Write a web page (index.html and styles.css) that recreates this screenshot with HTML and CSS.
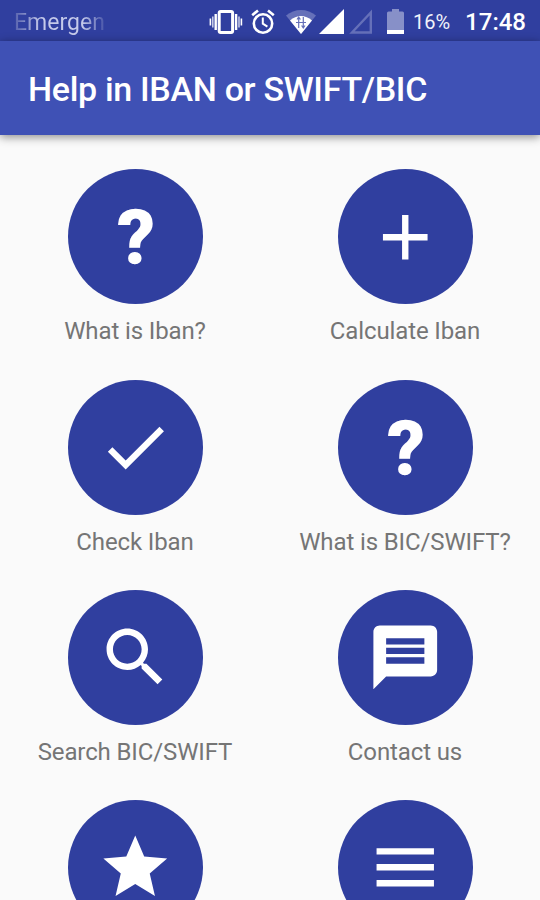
FILE: index.html
```html
<!DOCTYPE html>
<html lang="en">
<head>
    <meta charset="UTF-8">
    <meta name="viewport" content="width=device-width, initial-scale=1.0">
    <title>Help in IBAN or SWIFT/BIC</title>
    <link rel="stylesheet" href="styles.css">
</head>
<body>

    <div class="status-bar">
        <span class="carrier">Emergen</span>
        <div class="status-icons">
            <!-- vibrate -->
            <svg class="vibrate" width="34" height="26" viewBox="0 0 34 26">
                <rect x="10.2" y="2.5" width="13.4" height="21" rx="1.5" fill="none" stroke="#fff" stroke-width="3"/>
                <path d="M6.7 5v16M27.1 5v16" stroke="#fff" stroke-width="2.4"/>
                <path d="M3.8 7.5v11M30 7.5v11" stroke="#c3c8e6" stroke-width="1.6"/>
                <path d="M1.4 9.5v7M32.4 9.5v7" stroke="#fff" stroke-width="1.6"/>
            </svg>
            <!-- alarm -->
            <svg class="alarm" width="24" height="26" viewBox="0 0 24 26">
                <circle cx="12" cy="14.5" r="9.2" fill="none" stroke="#fff" stroke-width="2.6"/>
                <path d="M1.2 6.2L7 1.4M22.8 6.2L17 1.4" stroke="#fff" stroke-width="2.6"/>
                <path d="M11.8 8.5v6.2l4.6 3" fill="none" stroke="#fff" stroke-width="2"/>
            </svg>
            <!-- wifi -->
            <svg class="wifi" width="32" height="26" viewBox="0 0 32 26">
                <path d="M1 6.5C9.5 -1 22.5 -1 31 6.5L16 25z" fill="#6570b9"/>
                <path d="M5 11.5C11.5 5.5 20.5 5.5 27 11.5L16 25z" fill="#fff"/>
                <path d="M13.7 8v11M18.3 8v11M12 10.5l1.7-2.5 1.7 2.5M16.6 16.5l1.7 2.5 1.7-2.5M11 13.5h10" fill="none" stroke="#6570b9" stroke-width="1.2"/>
            </svg>
            <!-- signal -->
            <svg class="signal" width="25" height="25" viewBox="0 0 25 25">
                <path d="M25 0v25H0z" fill="#fff"/>
            </svg>
            <svg class="signal-empty" width="24" height="25" viewBox="0 0 24 25">
                <path d="M21.8 3.5v20H3z" fill="none" stroke="#6570b9" stroke-width="2.4"/>
            </svg>
            <!-- battery -->
            <svg class="battery" width="17" height="25" viewBox="0 0 17 25">
                <path d="M1.5 2.5H5V0h7v2.5h3.5Q17 2.5 17 4v17H0V4Q0 2.5 1.5 2.5z" fill="#8790c8"/>
                <path d="M0 21h17v4H0z" fill="#fff"/>
            </svg>
        </div>
        <span class="percent">16%</span>
        <span class="clock">17:48</span>
    </div>

    <div class="app-bar">
        <h1>Help in IBAN or SWIFT/BIC</h1>
    </div>

    <div class="menu">
        <a class="item">
            <span class="circle question">?</span>
            <span class="label">What is Iban?</span>
        </a>
        <a class="item">
            <span class="circle">
                <svg viewBox="0 0 24 24"><path d="M19 13h-6v6h-2v-6H5v-2h6V5h2v6h6v2z"/></svg>
            </span>
            <span class="label">Calculate Iban</span>
        </a>
        <a class="item">
            <span class="circle">
                <svg viewBox="0 0 24 24"><path d="M9 16.17L4.83 12l-1.42 1.41L9 19 21 7l-1.41-1.41z"/></svg>
            </span>
            <span class="label">Check Iban</span>
        </a>
        <a class="item">
            <span class="circle question">?</span>
            <span class="label">What is BIC/SWIFT?</span>
        </a>
        <a class="item">
            <span class="circle">
                <svg viewBox="0 0 24 24"><path d="M15.5 14h-.79l-.28-.27C15.41 12.59 16 11.11 16 9.5 16 5.91 13.09 3 9.5 3S3 5.91 3 9.5 5.91 16 9.5 16c1.61 0 3.09-.59 4.23-1.57l.27.28v.79l5 4.99L20.49 19l-4.99-5zm-6 0C7.01 14 5 11.99 5 9.5S7.01 5 9.5 5 14 7.01 14 9.5 11.99 14 9.5 14z"/></svg>
            </span>
            <span class="label">Search BIC/SWIFT</span>
        </a>
        <a class="item">
            <span class="circle">
                <svg viewBox="0 0 24 24"><path d="M20 2H4c-1.1 0-1.99.9-1.99 2L2 22l4-4h14c1.1 0 2-.9 2-2V4c0-1.1-.9-2-2-2zm-2 12H6v-2h12v2zm0-3H6V9h12v2zm0-3H6V6h12v2z"/></svg>
            </span>
            <span class="label">Contact us</span>
        </a>
        <a class="item">
            <span class="circle">
                <svg viewBox="0 0 24 24"><path d="M12 17.27L18.18 21l-1.64-7.03L22 9.24l-7.19-.61L12 2 9.19 8.63 2 9.24l5.46 4.73L5.82 21z"/></svg>
            </span>
        </a>
        <a class="item">
            <span class="circle">
                <svg viewBox="0 0 24 24"><path d="M3 18h18v-2H3v2zm0-5h18v-2H3v2zm0-7v2h18V6H3z"/></svg>
            </span>
        </a>
    </div>

</body>
</html>
```

FILE: styles.css
```css
* {
    box-sizing: border-box;
}
body {
    display: flex;
    flex-direction: column;
    margin: 0;
    height: 900px;
    overflow: hidden;
    font-family: Roboto, "Liberation Sans", sans-serif;
    background: #fafafa;
    color: #757575;
}
.status-bar {
    display: flex;
    flex: none;
    align-items: center;
    height: 41px;
    padding: 2px 14px 0;
    background: #303f9f;
    color: white;
}
.carrier {
    width: 91px;
    padding-top: 1px;
    font-size: 23px;
    color: transparent;
    background: linear-gradient(to right, #5560ad, #c5caea 30%, #c5caea 75%, #4653a8);
    background-clip: text;
    -webkit-background-clip: text;
}
.status-icons {
    display: flex;
    align-items: center;
    margin-left: 104px;
}
.alarm {
    margin-left: 8px;
}
.wifi {
    margin-left: 10px;
}
.signal {
    margin-left: 2px;
}
.signal-empty {
    margin-left: 5px;
}
.battery {
    margin-left: 14px;
}
.percent {
    margin-left: 9px;
    font-size: 20px;
    color: #f0f2fa;
}
.clock {
    margin-left: auto;
    font-size: 24px;
    font-weight: 500;
}
.app-bar {
    display: flex;
    flex: none;
    align-items: center;
    height: 94px;
    padding: 2px 28px 0;
    background: #3f51b5;
    color: white;
    box-shadow: 0 2px 9px rgba(0, 0, 0, 0.45);
}
.app-bar h1 {
    margin: 0;
    font-size: 34px;
    font-weight: 500;
    letter-spacing: -0.32px;
    white-space: nowrap;
}
.menu {
    display: grid;
    flex: 1;
    min-height: 0;
    overflow: hidden;
    grid-template-columns: 1fr 1fr;
    grid-auto-rows: 210.3px;
    padding-top: 34.25px;
    /* keep the app bar shadow visible */
    background: transparent;
}
.item {
    display: flex;
    flex-direction: column;
    align-items: center;
}
.circle {
    display: flex;
    justify-content: center;
    align-items: center;
    flex: none;
    width: 135px;
    height: 135px;
    border-radius: 50%;
    background: #303f9f;
    color: white;
}
.circle svg {
    width: 76.5px;
    height: 76.5px;
    fill: white;
}
.question {
    padding: 1px 0 0 2px;
    font-size: 75px;
    font-weight: 700;
    -webkit-text-stroke: 1.5px white;
}
.label {
    margin-top: 13px;
    font-size: 24px;
    line-height: 28px;
    letter-spacing: -0.12px;
    white-space: nowrap;
}
```
